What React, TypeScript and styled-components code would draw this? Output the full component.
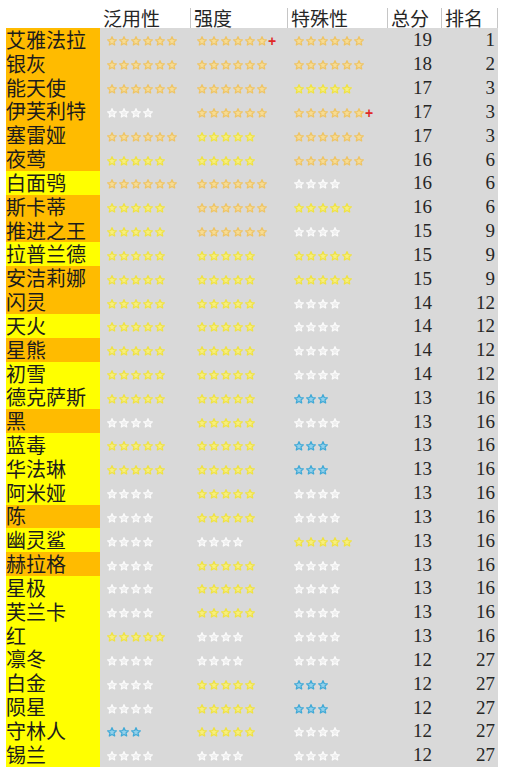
import React from "react";
import styled, { createGlobalStyle } from "styled-components";

const GlobalStyle = createGlobalStyle`
    html, body {
        margin: 0;
        padding: 0;
        background: #ffffff;
    }
`;

type Tier = "o" | "y";

interface IRow {
    name: string;
    tier: Tier;
    general: string;
    power: string;
    special: string;
    total: number;
    rank: number;
}

const raw: Array<[string, Tier, string, string, string, number, number]> = [
    ["艾雅法拉", "o", "6", "6+", "6", 19, 1],
    ["银灰", "o", "6", "6", "6", 18, 2],
    ["能天使", "o", "6", "6", "5", 17, 3],
    ["伊芙利特", "o", "4", "6", "6+", 17, 3],
    ["塞雷娅", "o", "6", "5", "6", 17, 3],
    ["夜莺", "o", "5", "5", "6", 16, 6],
    ["白面鸮", "y", "6", "6", "4", 16, 6],
    ["斯卡蒂", "o", "5", "6", "5", 16, 6],
    ["推进之王", "o", "5", "6", "4", 15, 9],
    ["拉普兰德", "y", "5", "5", "5", 15, 9],
    ["安洁莉娜", "o", "5", "5", "5", 15, 9],
    ["闪灵", "o", "5", "5", "4", 14, 12],
    ["天火", "y", "5", "5", "4", 14, 12],
    ["星熊", "o", "5", "5", "4", 14, 12],
    ["初雪", "y", "5", "5", "4", 14, 12],
    ["德克萨斯", "y", "5", "5", "3", 13, 16],
    ["黑", "o", "4", "5", "4", 13, 16],
    ["蓝毒", "y", "5", "5", "3", 13, 16],
    ["华法琳", "y", "5", "5", "3", 13, 16],
    ["阿米娅", "y", "4", "5", "4", 13, 16],
    ["陈", "o", "4", "5", "4", 13, 16],
    ["幽灵鲨", "y", "4", "4", "5", 13, 16],
    ["赫拉格", "o", "4", "5", "4", 13, 16],
    ["星极", "y", "4", "5", "4", 13, 16],
    ["芙兰卡", "y", "4", "5", "4", 13, 16],
    ["红", "y", "5", "4", "4", 13, 16],
    ["凛冬", "y", "4", "4", "4", 12, 27],
    ["白金", "y", "4", "5", "3", 12, 27],
    ["陨星", "y", "4", "5", "3", 12, 27],
    ["守林人", "y", "3", "5", "4", 12, 27],
    ["锡兰", "y", "4", "4", "4", 12, 27],
];

const rows: IRow[] = raw.map(([name, tier, general, power, special, total, rank]) => ({
    name, tier, general, power, special, total, rank,
}));

// colour of the stars follows how many there are
const starColors: Record<number, { stroke: string; fill: string }> = {
    6: { stroke: "#eec465", fill: "#f6dc95" },
    5: { stroke: "#efe243", fill: "#f6ee80" },
    4: { stroke: "#fbfbfb", fill: "#ececec" },
    3: { stroke: "#41a9d6", fill: "#93d0ea" },
};

const Page = styled.div`
    padding-left: 6px;
`;

const Sheet = styled.div`
    display: grid;
    grid-template-columns: 94px 90px 97px 100px 54px 57px;
    grid-template-rows: 28px;
    grid-auto-rows: 23.84px;
    width: max-content;
`;

const HeadCell = styled.div<{ $line?: boolean; $end?: boolean }>`
    margin-top: 8px;
    height: 20px;
    padding-left: 3px;
    border-left: ${(p) => (p.$line ? "1px solid #c6c6c6" : "none")};
    border-right: ${(p) => (p.$end ? "1px solid #c6c6c6" : "none")};
    font-family: "Noto Sans CJK SC", "Noto Sans", sans-serif;
    font-size: 19px;
    line-height: 20px;
    color: #262626;
    white-space: nowrap;
`;

const NameCell = styled.div<{ $tier: Tier }>`
    background: ${(p) => (p.$tier === "o" ? "#ffbb00" : "#ffff00")};
    display: flex;
    align-items: center;
    font-family: "Noto Sans CJK SC", "Noto Sans", sans-serif;
    font-size: 20px;
    line-height: 20px;
    color: #1c1c1c;
    white-space: nowrap;
`;

const StarCell = styled.div`
    background: #d9d9d9;
    display: flex;
    align-items: center;
    gap: 2px;
    padding: 3px 0 0 7px;
`;

const Plus = styled.span`
    font-family: "Liberation Sans", sans-serif;
    font-weight: bold;
    font-size: 14px;
    line-height: 10px;
    color: #e02a26;
    margin-left: -1px;
`;

const NumCell = styled.div<{ $pad: number }>`
    background: #d9d9d9;
    display: flex;
    align-items: center;
    justify-content: flex-end;
    padding-right: ${(p) => p.$pad}px;
    font-family: "Liberation Serif", serif;
    font-size: 19px;
    line-height: 19px;
    color: #262626;
`;

const Star: React.FC<{ count: number }> = ({ count }) => {
    const c = starColors[count];
    return (
        <svg width="10" height="10" viewBox="0 0 24 24">
            <polygon
                points="12,1.5 15,8.4 22.5,9.2 16.8,14.2 18.5,21.6 12,17.8 5.5,21.6 7.2,14.2 1.5,9.2 9,8.4"
                fill={c.fill}
                stroke={c.stroke}
                strokeWidth="3"
                strokeLinejoin="round"
            />
        </svg>
    );
};

const Stars: React.FC<{ value: string }> = ({ value }) => {
    const count = parseInt(value, 10);
    const plus = value.endsWith("+");
    return (
        <StarCell>
            {Array.from({ length: count }, (_, i) => (
                <Star key={i} count={count} />
            ))}
            {plus && <Plus>+</Plus>}
        </StarCell>
    );
};

export default function App() {
    return (
        <Page>
            <GlobalStyle />
            <Sheet>
                <HeadCell />
                <HeadCell>泛用性</HeadCell>
                <HeadCell $line>强度</HeadCell>
                <HeadCell $line>特殊性</HeadCell>
                <HeadCell $line>总分</HeadCell>
                <HeadCell $line $end>排名</HeadCell>
                {rows.map((r) => (
                    <React.Fragment key={r.name}>
                        <NameCell $tier={r.tier}>{r.name}</NameCell>
                        <Stars value={r.general} />
                        <Stars value={r.power} />
                        <Stars value={r.special} />
                        <NumCell $pad={9}>{r.total}</NumCell>
                        <NumCell $pad={3}>{r.rank}</NumCell>
                    </React.Fragment>
                ))}
            </Sheet>
        </Page>
    );
}
